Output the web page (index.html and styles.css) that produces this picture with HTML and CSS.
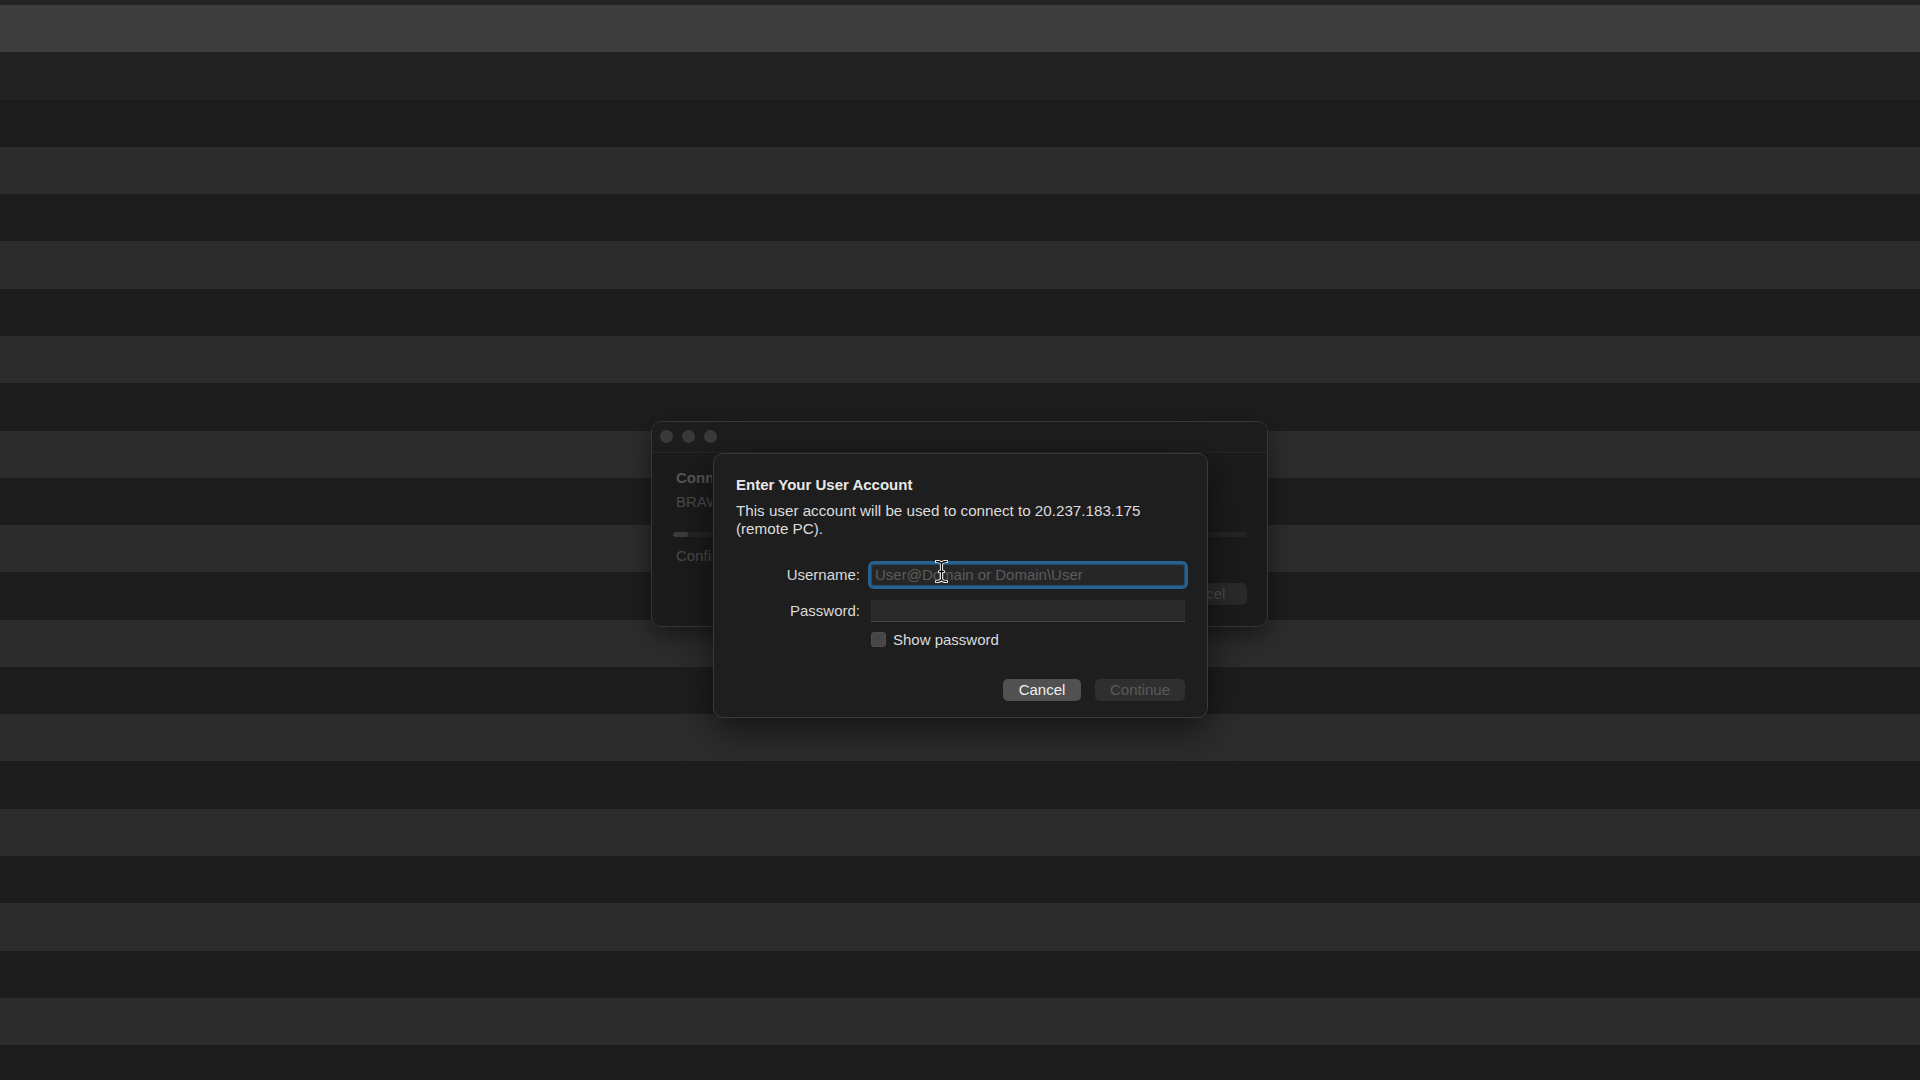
FILE: index.html
```html
<!DOCTYPE html>
<html lang="en">
<head>
<meta charset="utf-8">
<title>Enter Your User Account</title>
<link rel="stylesheet" href="styles.css">
</head>
<body>
<div class="desktop">
  <div class="app-window">
    <div class="titlebar">
      <span class="light"></span><span class="light"></span><span class="light"></span>
    </div>
    <div class="app-content">
      <div class="app-text-clip">
        <div class="app-heading">Connecting</div>
        <div class="app-sub">BRAWLDEV01</div>
      </div>
      <div class="progress"><span class="progress-fill"></span></div>
      <div class="app-text-clip">
        <div class="app-sub">Configuring remote PC...</div>
      </div>
      <div class="app-actions"><span class="app-button">Cancel</span></div>
    </div>
  </div>

  <div class="sheet">
    <div class="sheet-title">Enter Your User Account</div>
    <div class="sheet-text">This user account will be used to connect to 20.237.183.175 (remote PC).</div>
    <div class="form">
      <div class="form-label">Username:</div>
      <div class="field field-focus"><span class="placeholder">User@Domain or Domain\User</span></div>
      <div class="form-label">Password:</div>
      <div class="field field-pass"></div>
      <div></div>
      <div class="check"><span class="check-box"></span><span>Show password</span></div>
    </div>
    <div class="actions">
      <span class="btn btn-cancel">Cancel</span>
      <span class="btn btn-disabled">Continue</span>
    </div>
  </div>

  <svg class="ibeam" width="13" height="23" viewBox="0 0 13 23">
    <path d="M1.5 1.5 C4 1.5 5.5 2 6.5 3.3 C7.5 2 9 1.5 11.5 1.5 M6.5 3.3 V19.7 M1.5 21.5 C4 21.5 5.5 21 6.5 19.7 C7.5 21 9 21.5 11.5 21.5 M4.5 11.5 H8.5" fill="none" stroke="#ffffff" stroke-width="3.2" stroke-linecap="round"/>
    <path d="M1.5 1.5 C4 1.5 5.5 2 6.5 3.3 C7.5 2 9 1.5 11.5 1.5 M6.5 3.3 V19.7 M1.5 21.5 C4 21.5 5.5 21 6.5 19.7 C7.5 21 9 21.5 11.5 21.5 M4.5 11.5 H8.5" fill="none" stroke="#000000" stroke-width="1.3" stroke-linecap="round"/>
  </svg>
</div>
</body>
</html>
```

FILE: styles.css
```css
* {
  box-sizing: border-box;
}

html, body {
  margin: 0;
  padding: 0;
}

body {
  width: 1920px;
  height: 1080px;
  overflow: hidden;
  font-family: "Liberation Sans", Arial, sans-serif;
  background:
    linear-gradient(to bottom,
      #242424 0 5px,
      #3d3d3d 5px 52px,
      #222222 52px 99.5px,
      #1c1c1c 99.5px 147px,
      transparent 147px) no-repeat,
    repeating-linear-gradient(to bottom,
      #2c2c2c 0 5px,
      #1d1d1d 5px 52.28px,
      #2c2c2c 52.28px 94.56px);
}

.desktop {
  position: relative;
  width: 1920px;
  height: 1080px;
}

/* background (dimmed) app window */
.app-window {
  position: absolute;
  left: 651px;
  top: 421px;
  width: 617px;
  height: 206px;
  border: 1px solid #363636;
  border-radius: 10px;
  background: #1b1b1b;
  box-shadow: 0 8px 24px rgba(0, 0, 0, 0.45);
  overflow: hidden;
}

.titlebar {
  height: 31px;
  display: flex;
  align-items: center;
  gap: 9px;
  padding-left: 8px;
  padding-bottom: 1px;
  background: #1d1d1d;
  border-bottom: 1px solid #262626;
}

.light {
  width: 13px;
  height: 13px;
  border-radius: 50%;
  background: #3a3a3a;
}

.app-content {
  padding: 16px 20px 0 21px;
}

/* the part of the window text that is not covered by the sheet */
.app-text-clip {
  width: 39px;
  overflow: hidden;
}

.app-heading {
  font-size: 15px;
  line-height: 18px;
  font-weight: bold;
  color: #555555;
  padding-left: 3px;
  white-space: nowrap;
}

.app-sub {
  font-size: 15px;
  line-height: 18px;
  color: #4a4a4a;
  padding-left: 3px;
  white-space: nowrap;
}

.app-heading + .app-sub {
  margin-top: 6px;
}

.progress {
  margin-top: 21px;
  margin-bottom: 10px;
  height: 5px;
  border-radius: 3px;
  background: #242424;
  overflow: hidden;
}

.progress-fill {
  display: block;
  width: 15px;
  height: 5px;
  border-radius: 3px;
  background: #3c3c3c;
}

.app-actions {
  margin-top: 18px;
  display: flex;
  justify-content: flex-end;
}

.app-button {
  width: 90px;
  height: 22px;
  border-radius: 5px;
  background: #2a2a2a;
  color: #4c4c4c;
  font-size: 15px;
  line-height: 22px;
  text-align: center;
}

/* sheet dialog */
.sheet {
  position: absolute;
  left: 713px;
  top: 453px;
  width: 495px;
  height: 265px;
  border: 1px solid #3a3a3a;
  border-radius: 10px;
  background: #1e1e1e;
  box-shadow: 0 12px 36px rgba(0, 0, 0, 0.55);
  padding: 22px 22px 0 22px;
  color: #dedede;
}

.sheet-title {
  font-size: 15px;
  line-height: 18px;
  font-weight: bold;
  color: #e8e8e8;
}

.sheet-text {
  margin-top: 8px;
  font-size: 15.2px;
  line-height: 18px;
  color: #dcdcdc;
}

.form {
  margin-top: 26px;
  display: grid;
  grid-template-columns: 124px 314px;
  column-gap: 11px;
  row-gap: 13.5px;
  align-items: center;
}

.form-label {
  font-size: 15px;
  line-height: 18px;
  text-align: right;
  color: #dadada;
}

.field {
  height: 22px;
  background: #262626;
  display: flex;
  align-items: center;
  padding-left: 4px;
}

.field-focus {
  border-radius: 3px;
  box-shadow: 0 0 0 3px #28618e, inset 0 0 0 1px #1f4d72;
}

.field-pass {
  background: #2a2a2a;
  border-bottom: 1px solid #464646;
}

.placeholder {
  font-size: 15px;
  line-height: 18px;
  color: #5c5c5c;
  white-space: nowrap;
}

.check {
  margin-top: -4.5px;
  display: flex;
  align-items: center;
  gap: 7px;
  font-size: 15px;
  line-height: 18px;
  color: #dcdcdc;
}

.check-box {
  width: 15px;
  height: 15px;
  border-radius: 3px;
  background: #464646;
  border: 1px solid #4e4e4e;
}

.actions {
  margin-top: 30.5px;
  display: flex;
  justify-content: flex-end;
  gap: 14px;
}

.btn {
  height: 22px;
  border-radius: 5px;
  font-size: 15px;
  line-height: 22px;
  text-align: center;
}

.btn-cancel {
  width: 78px;
  background: #515151;
  color: #f0f0f0;
}

.btn-disabled {
  width: 90px;
  background: #2f2f2f;
  color: #595959;
}

/* mouse pointer (text cursor) */
.ibeam {
  position: absolute;
  left: 935px;
  top: 560px;
}
```
